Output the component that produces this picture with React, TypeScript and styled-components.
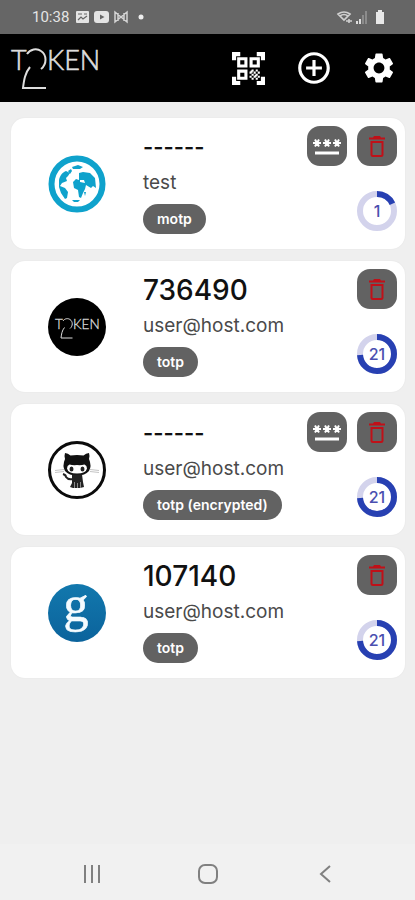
import React from "react";
import styled, { createGlobalStyle } from "styled-components";
import { MdAddCircleOutline, MdSettings } from "react-icons/md";

const GlobalStyle = createGlobalStyle`
  * { box-sizing: border-box; }
  body { margin: 0; background: #efefef; font-family: Inter, sans-serif; }
  button { padding: 0; border: 0; font: inherit; cursor: pointer; }
  svg { display: block; flex: none; overflow: visible; }
`;

const Screen = styled.div`
  display: flex;
  flex-direction: column;
  min-height: 100vh;
`;

const StatusBar = styled.div`
  display: flex;
  align-items: center;
  justify-content: space-between;
  height: 34px;
  padding: 0 29px 0 32px;
  background: #666;
  color: #e4e4e4;
  font: 400 15px/18px Roboto, sans-serif;
`;

const StatusGroup = styled.div`
  display: flex;
  align-items: center;
  gap: 5px;
`;

const Clock = styled.span`
  margin-right: 2px;
`;

const Header = styled.header`
  display: flex;
  align-items: center;
  justify-content: space-between;
  height: 68px;
  padding: 0 16px 0 11px;
  background: #000;
`;

const HeaderActions = styled.div`
  display: flex;
  gap: 24px;
`;

const HeaderButton = styled.button`
  display: grid;
  place-items: center;
  width: 41px;
  height: 41px;
  background: none;
  color: #fff;
`;

const TokenList = styled.ul`
  display: flex;
  flex: 1;
  flex-direction: column;
  gap: 12px;
  margin: 0;
  padding: 16px 10px 16px 11px;
  list-style: none;
`;

const Card = styled.li`
  display: flex;
  align-items: stretch;
  gap: 37px;
  min-height: 131px;
  padding: 8px 8px 15px 37px;
  border-radius: 14px;
  background: #fff;
  box-shadow: 0 0 2px rgba(0, 0, 0, 0.06);
`;

const Avatar = styled.div`
  display: grid;
  place-items: center;
  padding-top: 7px;
`;

const Details = styled.div`
  display: flex;
  flex: 1;
  flex-direction: column;
  align-items: flex-start;
  min-width: 0;
  padding-top: 3px;
`;

const Code = styled.div<{ $masked: boolean }>`
  height: 36px;
  color: #111;
  font-size: ${(p) => (p.$masked ? 22 : 28)}px;
  font-weight: ${(p) => (p.$masked ? 600 : 500)};
  line-height: 36px;
`;

const Account = styled.div`
  height: 39px;
  color: #4a4a4a;
  font-size: 19px;
  line-height: 36px;
`;

const Tag = styled.span`
  padding: 0 14px;
  border-radius: 15px;
  background: #626262;
  color: #fff;
  font-size: 14px;
  font-weight: 600;
  line-height: 30px;
  white-space: nowrap;
`;

const Side = styled.div`
  display: flex;
  flex-direction: column;
  align-items: flex-end;
  justify-content: space-between;
  margin-left: -37px;
  padding-bottom: 3px;
`;

const CardActions = styled.div`
  display: flex;
  gap: 10px;
`;

const CardButton = styled.button<{ $danger?: boolean }>`
  display: grid;
  place-items: center;
  width: 40px;
  height: 40px;
  border-radius: 13px;
  background: #626262;
  color: ${(p) => (p.$danger ? "#c01018" : "#fff")};
`;

const Timer = styled.div`
  display: grid;
  place-items: center;
  width: 40px;
  height: 40px;
  color: #4a4fb0;
  font-size: 16px;
  font-weight: 500;

  > * { grid-area: 1 / 1; }
`;

const NavBar = styled.nav`
  display: flex;
  align-items: center;
  justify-content: space-around;
  height: 56px;
  padding: 4px 32px 0 34px;
  background: #f1f1f1;
`;

const NavButton = styled.button`
  display: grid;
  place-items: center;
  width: 48px;
  height: 48px;
  background: none;
  color: #808080;
`;

function Logo({ width, height }: { width: number; height: number }) {
  return (
    <svg width={width} height={height} viewBox="0 0 90 44" fill="none" stroke="#ddd" role="img" aria-label="Token2">
      <g fill="#ddd" strokeWidth="0.6" fontFamily="Lato, sans-serif" fontWeight="300" fontSize="27">
        <text x="0" y="24">T</text>
        <text x="36" y="24">KEN</text>
      </g>
      <path strokeWidth="2" d="M16 8C19 3 26 2 30 5C36 9 36 18 30 23M19 21C14 27 13 34 12 42H35" />
    </svg>
  );
}

function QrIcon() {
  return (
    <svg width="33" height="33" viewBox="0 0 32 32" fill="currentColor">
      <path d="M0 0H8V4H4V8H0zM24 0H32V8H28V4H24zM0 24H4V28H8V32H0zM28 24H32V32H24V28H28z" />
      <path fillRule="evenodd" d="M5 5H15V15H5zM8 8V12H12V8zM17 5H27V15H17zM20 8V12H24V8zM5 17H15V27H5zM8 20V24H12V20z" />
      <path d="M19 17H21V19H19zM23 17H25V19H23zM17 19H19V21H17zM21 19H23V21H21zM25 19H27V21H25zM19 21H21V23H19zM23 21H25V23H23zM17 23H19V25H17zM21 23H23V25H21zM25 23H27V25H25zM19 25H21V27H19zM23 25H25V27H23zM18 18H20V20H18zM22 22H24V24H22z" />
    </svg>
  );
}

function PasswordIcon() {
  return (
    <svg width="28" height="20" viewBox="0 0 28 20" fill="none" stroke="currentColor">
      <path strokeWidth="3" d="M2 17H26" />
      <path
        strokeWidth="2"
        d="M0 7H8M2 3.5L6 10.5M6 3.5L2 10.5M10 7H18M12 3.5L16 10.5M16 3.5L12 10.5M20 7H28M22 3.5L26 10.5M26 3.5L22 10.5"
      />
    </svg>
  );
}

function TrashIcon() {
  return (
    <svg width="18" height="22" viewBox="0 0 18 22" fill="none" stroke="currentColor" strokeWidth="2">
      <path d="M3.5 7H14.5V19.5Q14.5 21 13 21H5Q3.5 21 3.5 19.5z" />
      <path fill="currentColor" stroke="none" d="M1 2.5H5L6 1H12L13 2.5H17V4.5H1z" />
    </svg>
  );
}

function GlobeAvatar() {
  return (
    <svg width="58" height="58" viewBox="0 0 58 58" fill="#0fa2cc">
      <circle cx="29" cy="29" r="25.5" fill="#fff" stroke="#0fa2cc" strokeWidth="6" />
      <path d="M11 25C12 20 15 17 18 16L20 17L22 18L20 21L18 23L19 26L14 28L12 31L17 33L20 37L19 43L17 44L13 38L11 32z" />
      <path d="M24 12L30 10L35 12L32 14L25 14zM20 16L23 14L24 16L22 19z" />
      <path d="M31 18L35 17L42 18L47 23L48 33L45 31L43 33L38 30L37 34L35 38L33 43L31 42L30 35L26 33L25 27L28 24L31 25zM36 37L38 37L37 41zM24 45L32 45L30 47L26 47z" />
      <path fill="#fff" d="M32 25L36 25L37 28L32 27z" />
    </svg>
  );
}

function TokenAvatar() {
  return (
    <svg width="58" height="58" viewBox="0 0 58 58">
      <circle cx="29" cy="29" r="29" fill="#000" />
      <g transform="translate(7 19)">
        <Logo width={45} height={22} />
      </g>
    </svg>
  );
}

function OctocatAvatar() {
  return (
    <svg width="58" height="58" viewBox="0 0 58 58">
      <circle cx="29" cy="29" r="27.5" fill="#fff" stroke="#0b0b0b" strokeWidth="3" />
      <path fill="#111" d="M17 12Q20 12 22.5 14.5Q29 13.5 35.5 14.5Q38 12 41 12Q42 15 41 18Q44 25 41 30Q37 34.5 29 34.5Q21 34.5 17 30Q14 25 17 18Q16 15 17 12z" />
      <path fill="#fff" d="M21.5 23.5Q25 24.5 29 24Q33 24.5 36.5 23.5Q39 24.5 39 27.5Q38 32.5 29 32.5Q20 32.5 19 27.5Q19 24.5 21.5 23.5z" />
      <ellipse cx="23.5" cy="28" rx="2" ry="2.5" fill="#222" />
      <ellipse cx="34.5" cy="28" rx="2" ry="2.5" fill="#222" />
      <path stroke="#c4c4c4" strokeWidth="1" fill="none" d="M7 29.5L16 28.5M7 31.5L16 30.5M42 28.5L51 29.5M42 30.5L51 31.5" />
      <path stroke="#222" strokeWidth="2" fill="none" d="M15 33Q18 34 18 36Q20 39 25 38" />
      <path fill="#222" d="M24 33.5H34L35 41L36 46L32 47H25L22 46L24 42z" />
      <path stroke="#888" strokeWidth="1" d="M26.5 41V47M29.5 42V47M32.5 41V47" />
    </svg>
  );
}

function GoogleAvatar() {
  return (
    <svg width="58" height="58" viewBox="0 0 58 58">
      <defs>
        <linearGradient id="blue" x1="0" y1="0" x2="0" y2="1">
          <stop offset="0" stopColor="#1278ad" />
          <stop offset="1" stopColor="#0b639c" />
        </linearGradient>
      </defs>
      <circle cx="29" cy="29" r="29" fill="url(#blue)" />
      <text x="28" y="37" fill="#f4fbff" stroke="#f4fbff" strokeWidth="0.6" fontFamily="Liberation Serif, serif" fontSize="50" textAnchor="middle">g</text>
    </svg>
  );
}

function Countdown({ seconds, share }: { seconds: number; share: number }) {
  return (
    <Timer role="timer">
      <svg width="40" height="40" viewBox="0 0 40 40" fill="none" strokeWidth="6">
        <circle cx="20" cy="20" r="17" stroke="#d3d3ec" />
        <circle cx="20" cy="20" r="17" stroke="#2740b2" pathLength="100" strokeDasharray={`${share} 100`} transform="rotate(-90 20 20)" />
      </svg>
      <span>{seconds}</span>
    </Timer>
  );
}

const tokens = [
  { code: "------", masked: true, account: "test", tag: "motp", seconds: 1, share: 18, avatar: <GlobeAvatar /> },
  { code: "736490", masked: false, account: "user@host.com", tag: "totp", seconds: 21, share: 74, avatar: <TokenAvatar /> },
  { code: "------", masked: true, account: "user@host.com", tag: "totp (encrypted)", seconds: 21, share: 74, avatar: <OctocatAvatar /> },
  { code: "107140", masked: false, account: "user@host.com", tag: "totp", seconds: 21, share: 74, avatar: <GoogleAvatar /> },
];

export default function App() {
  return (
    <Screen>
      <GlobalStyle />
      <StatusBar>
        <StatusGroup>
          <Clock>10:38</Clock>
          <svg width="13" height="12" viewBox="0 0 13 12">
            <rect width="13" height="12" rx="1" fill="#e4e4e4" />
            <path d="M2 9L5 6L7 8L11 5M2 3H6M8 3H11" fill="none" stroke="#666" strokeWidth="1.2" />
          </svg>
          <svg width="15" height="12" viewBox="0 0 15 12">
            <rect width="15" height="12" rx="3" fill="#e4e4e4" />
            <path d="M6 3.5L10.5 6L6 8.5z" fill="#666" />
          </svg>
          <svg width="14" height="12" viewBox="0 0 14 12" fill="none" stroke="#d4d4d4" strokeWidth="1.5">
            <path d="M1 11V1L7 6L13 1V11L7 6zM4 2V10M10 2V10" />
          </svg>
          <svg width="20" height="6" viewBox="0 0 20 6">
            <circle cx="8" cy="3" r="2.5" fill="#eee" />
          </svg>
        </StatusGroup>
        <StatusGroup>
          <svg width="12" height="13" viewBox="0 0 12 13" fill="none" stroke="#cfcfcf" strokeWidth="1.6">
            <path d="M0 3Q6 -1 12 3L6 9zM2 5Q6 2 10 5M8 10H14M11 8V12" />
          </svg>
          <svg width="12" height="13" viewBox="0 0 12 13">
            <path d="M1 10H3V13H1zM4 8H6V13H4z" fill="#ddd" />
            <path d="M7 4H9V13H7zM10 0H12V13H10z" fill="#8c8c8c" />
          </svg>
          <svg width="14" height="14" viewBox="0 0 14 14" fill="#e8e8e8">
            <path d="M6 0H10V2H12V14H4V2H6z" />
          </svg>
        </StatusGroup>
      </StatusBar>
      <Header>
        <Logo width={90} height={44} />
        <HeaderActions>
          <HeaderButton aria-label="Scan QR code"><QrIcon /></HeaderButton>
          <HeaderButton aria-label="Add token"><MdAddCircleOutline size={38} /></HeaderButton>
          <HeaderButton aria-label="Settings"><MdSettings size={36} /></HeaderButton>
        </HeaderActions>
      </Header>
      <TokenList>
        {tokens.map((t, i) => (
          <Card key={i}>
            <Avatar>{t.avatar}</Avatar>
            <Details>
              <Code $masked={t.masked}>{t.code}</Code>
              <Account>{t.account}</Account>
              <Tag>{t.tag}</Tag>
            </Details>
            <Side>
              <CardActions>
                {t.masked && <CardButton aria-label="Show code"><PasswordIcon /></CardButton>}
                <CardButton $danger aria-label="Delete token"><TrashIcon /></CardButton>
              </CardActions>
              <Countdown seconds={t.seconds} share={t.share} />
            </Side>
          </Card>
        ))}
      </TokenList>
      <NavBar>
        <NavButton aria-label="Recent apps">
          <svg width="18" height="18" viewBox="0 0 18 18" fill="none" stroke="currentColor" strokeWidth="2">
            <path d="M2 0V18M9 0V18M16 0V18" />
          </svg>
        </NavButton>
        <NavButton aria-label="Home">
          <svg width="20" height="20" viewBox="0 0 20 20" fill="none" stroke="currentColor" strokeWidth="2">
            <rect x="1" y="1" width="18" height="18" rx="6" />
          </svg>
        </NavButton>
        <NavButton aria-label="Back">
          <svg width="12" height="18" viewBox="0 0 12 18" fill="none" stroke="currentColor" strokeWidth="2">
            <path d="M11 1L2 9L11 17" />
          </svg>
        </NavButton>
      </NavBar>
    </Screen>
  );
}
